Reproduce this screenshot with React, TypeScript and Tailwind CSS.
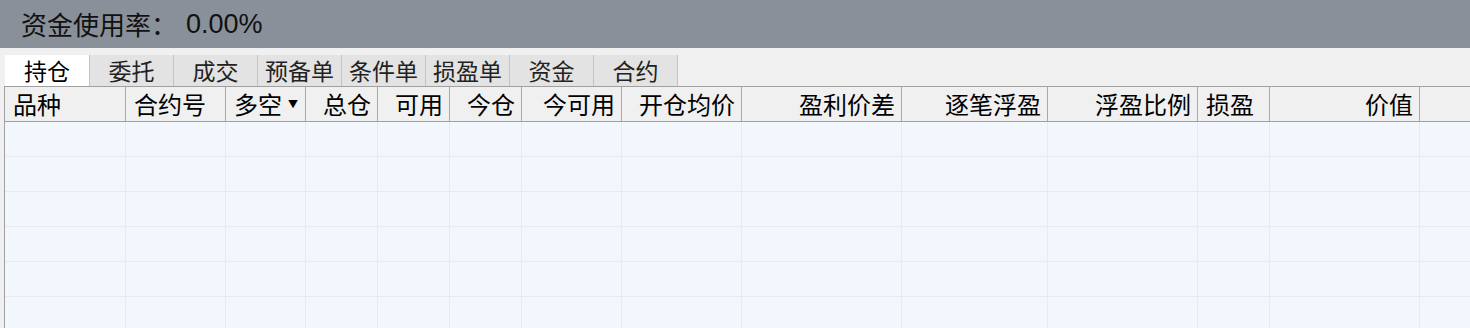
const tabs = ["持仓", "委托", "成交", "预备单", "条件单", "损盈单", "资金", "合约"];

type Col = { label: string; w: number; align: "left" | "right"; arrow?: boolean };

const cols: Col[] = [
  { label: "品种", w: 121, align: "left" },
  { label: "合约号", w: 100, align: "left" },
  { label: "多空", w: 80, align: "left", arrow: true },
  { label: "总仓", w: 72, align: "right" },
  { label: "可用", w: 72, align: "right" },
  { label: "今仓", w: 72, align: "right" },
  { label: "今可用", w: 100, align: "right" },
  { label: "开仓均价", w: 120, align: "right" },
  { label: "盈利价差", w: 160, align: "right" },
  { label: "逐笔浮盈", w: 146, align: "right" },
  { label: "浮盈比例", w: 150, align: "right" },
  { label: "损盈", w: 72, align: "left" },
  { label: "价值", w: 150, align: "right" },
];

const rows = [0, 1, 2, 3, 4, 5];

export default function App() {
  return (
    <div
      className="w-[1470px] h-[328px] overflow-hidden bg-[#f0f0f0] text-black"
      style={{ fontFamily: '"Noto Sans CJK SC", "Noto Sans", sans-serif' }}
    >
      {/* top summary bar */}
      <div className="h-[48px] bg-[#8a9099] flex items-center pl-[21px] text-[26px] leading-none text-[#111]">
        资金使用率：
        <span className="ml-[9px] text-[27px]" style={{ fontFamily: '"Liberation Sans", sans-serif' }}>
          0.00%
        </span>
      </div>

      {/* tabs */}
      <div className="flex pl-[5px] pt-[7px] h-[38px]">
        {tabs.map((t, i) => (
          <div
            key={t}
            className={
              i === 0
                ? "w-[84px] h-[31px] bg-white flex items-center justify-center text-[23px] leading-none"
                : "w-[84px] h-[31px] bg-[#e3e3e3] border-l border-[#c4c4c4] flex items-center justify-center text-[23px] leading-none text-[#222]"
            }
          >
            {t}
          </div>
        ))}
        <div className="w-px h-[31px] bg-[#c4c4c4]" />
      </div>

      {/* table */}
      <div className="ml-[4px] border-l border-t border-[#a0a0a0] h-[242px] bg-[#f2f7fd]">
        <div className="flex h-[35px] bg-[#f0f0f0] border-b border-[#a0a0a0]">
          {cols.map((c) => (
            <div
              key={c.label}
              className={
                "shrink-0 h-full flex items-center pl-[8px] pr-[6px] border-r border-[#a8a8a8] text-[24px] leading-none " +
                (c.align === "right" ? "justify-end" : "justify-start")
              }
              style={{ width: c.w }}
            >
              {c.label}
              {c.arrow && <span className="ml-[6px] text-[10px]">▼</span>}
            </div>
          ))}
          <div className="flex-1" />
        </div>
        {rows.map((r) => (
          <div key={r} className="flex h-[35px] border-b border-[#e8eaec]">
            {cols.map((c) => (
              <div key={c.label} className="shrink-0 h-full border-r border-[#e8eaec]" style={{ width: c.w }} />
            ))}
            <div className="flex-1" />
          </div>
        ))}
      </div>
    </div>
  );
}
